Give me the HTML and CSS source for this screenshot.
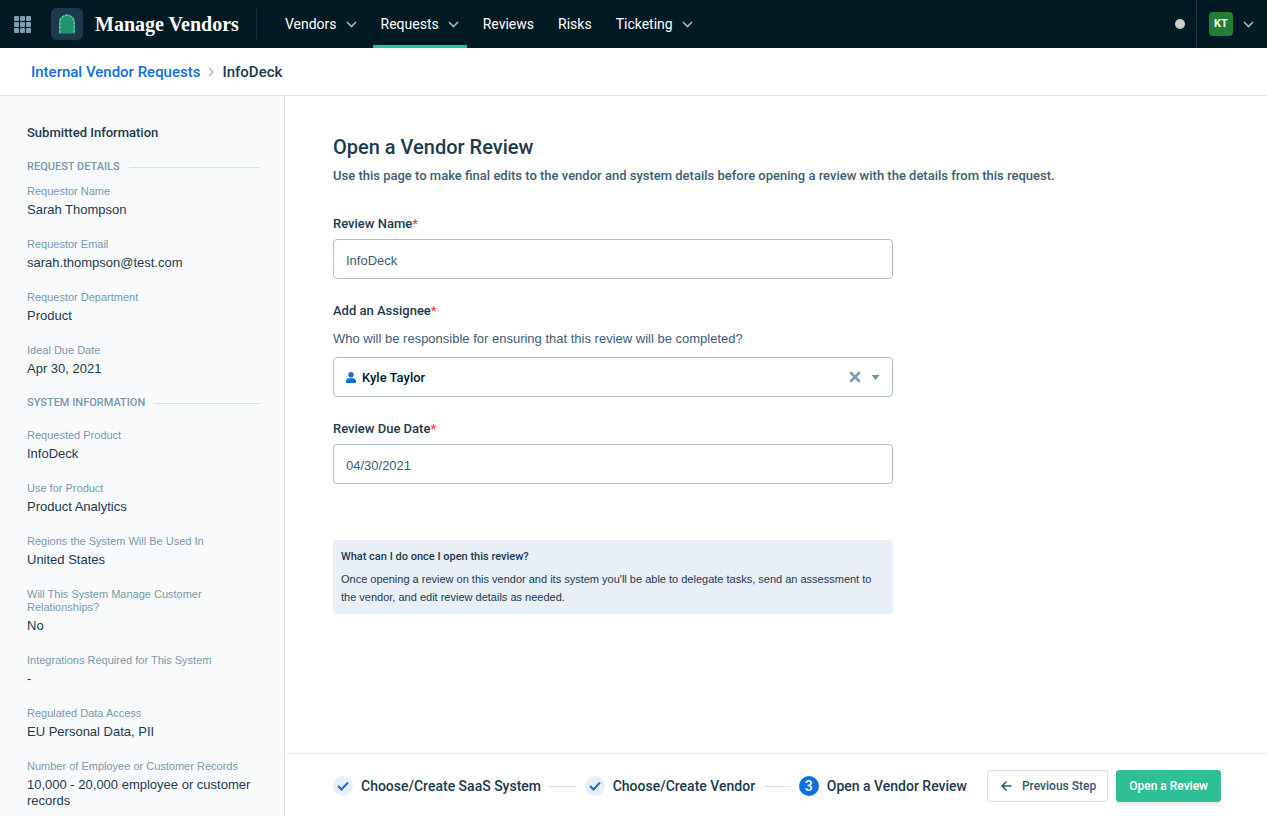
FILE: index.html
```html
<!DOCTYPE html>
<html lang="en">
<head>
<meta charset="utf-8">
<meta name="viewport" content="width=device-width, initial-scale=1">
<title>Manage Vendors – InfoDeck</title>
<link rel="stylesheet" href="styles.css">
</head>
<body>
<header class="topbar">
  <button class="icon-button" type="button" aria-label="Apps">
    <svg width="17" height="17" viewBox="0 0 17 17" fill="#7f9cb2"><rect width="5" height="5" rx="1"/><rect x="6" width="5" height="5" rx="1"/><rect x="12" width="5" height="5" rx="1"/><rect y="6" width="5" height="5" rx="1"/><rect x="6" y="6" width="5" height="5" rx="1"/><rect x="12" y="6" width="5" height="5" rx="1"/><rect y="12" width="5" height="5" rx="1"/><rect x="6" y="12" width="5" height="5" rx="1"/><rect x="12" y="12" width="5" height="5" rx="1"/></svg>
  </button>
  <div class="brand">
    <span class="brand-logo">
      <svg width="18" height="20" viewBox="0 0 18 20"><path d="M1 19.500V8.500a8 8 0 0 1 16 0v11z" fill="#22936f"/><path d="M1.800 19V8.500a7.200 7.200 0 0 1 14.400 0V19" fill="none" stroke="#4fd0a4" stroke-width="1.400" stroke-dasharray="3 1"/></svg>
    </span>
    <span class="brand-name">Manage Vendors</span>
  </div>
  <nav class="nav" aria-label="Main">
    <a class="nav-link" href="#">Vendors <svg class="chevron" viewBox="0 0 11 7"><path d="M1 1l4.500 4.500L10 1"/></svg></a>
    <a class="nav-link active" href="#">Requests <svg class="chevron" viewBox="0 0 11 7"><path d="M1 1l4.500 4.500L10 1"/></svg></a>
    <a class="nav-link" href="#">Reviews</a>
    <a class="nav-link" href="#">Risks</a>
    <a class="nav-link" href="#">Ticketing <svg class="chevron" viewBox="0 0 11 7"><path d="M1 1l4.500 4.500L10 1"/></svg></a>
  </nav>
  <span class="status-dot"></span>
  <button class="account" type="button" aria-label="Account">
    <span class="avatar">KT</span>
    <svg class="chevron" viewBox="0 0 11 7"><path d="M1 1l4.500 4.500L10 1"/></svg>
  </button>
</header>

<nav class="breadcrumb" aria-label="Breadcrumb">
  <a class="crumb-link" href="#">Internal Vendor Requests</a>
  <svg width="6" height="10" viewBox="0 0 6 10" fill="none" stroke="#a9bccb" stroke-width="1.500"><path d="M1 1l4 4-4 4"/></svg>
  <span>InfoDeck</span>
</nav>

<div class="layout">
  <aside class="sidebar">
    <h2 class="sidebar-title">Submitted Information</h2>
    <section class="section">
      <h3 class="section-title">REQUEST DETAILS</h3>
      <dl class="facts">
        <div><dt>Requestor Name</dt><dd>Sarah Thompson</dd></div>
        <div><dt>Requestor Email</dt><dd>sarah.thompson@test.com</dd></div>
        <div><dt>Requestor Department</dt><dd>Product</dd></div>
        <div><dt>Ideal Due Date</dt><dd>Apr 30, 2021</dd></div>
      </dl>
    </section>
    <section class="section spaced">
      <h3 class="section-title">SYSTEM INFORMATION</h3>
      <dl class="facts">
        <div><dt>Requested Product</dt><dd>InfoDeck</dd></div>
        <div><dt>Use for Product</dt><dd>Product Analytics</dd></div>
        <div><dt>Regions the System Will Be Used In</dt><dd>United States</dd></div>
        <div><dt>Will This System Manage Customer Relationships?</dt><dd>No</dd></div>
        <div><dt>Integrations Required for This System</dt><dd>-</dd></div>
        <div><dt>Regulated Data Access</dt><dd>EU Personal Data, PII</dd></div>
        <div><dt>Number of Employee or Customer Records</dt><dd>10,000 - 20,000 employee or customer records</dd></div>
      </dl>
    </section>
  </aside>

  <main class="main">
    <form class="content" id="review">
      <h1 class="title">Open a Vendor Review</h1>
      <p class="lead">Use this page to make final edits to the vendor and system details before opening a review with the details from this request.</p>

      <div class="field">
        <label class="label" for="name">Review Name<span class="required">*</span></label>
        <input class="control" id="name" type="text" value="InfoDeck">
      </div>

      <div class="field">
        <label class="label" for="assignee">Add an Assignee<span class="required">*</span></label>
        <p class="hint" id="assignee-hint">Who will be responsible for ensuring that this review will be completed?</p>
        <div class="picker">
          <select class="control picker-select" id="assignee" aria-describedby="assignee-hint"><option>Kyle Taylor</option></select>
          <svg class="picker-user" width="10" height="11" viewBox="0 0 10 11" fill="#0f6fde"><circle cx="5" cy="2.700" r="2.700"/><path d="M0 11V9.300C0 7.500 1.200 6.200 2.900 6.200h4.200C8.800 6.200 10 7.500 10 9.300V11z"/></svg>
          <button class="picker-clear" type="button" aria-label="Clear assignee"><svg width="12" height="12" viewBox="0 0 12 12" stroke="#7b9cb3" stroke-width="2.600" stroke-linecap="round"><path d="M2 2l8 8M10 2l-8 8"/></svg></button>
          <svg class="picker-arrow" width="9" height="5" viewBox="0 0 9 5" fill="#7095ae"><path d="M.5 0h8L4.500 5z"/></svg>
        </div>
      </div>

      <div class="field">
        <label class="label" for="due">Review Due Date<span class="required">*</span></label>
        <input class="control" id="due" type="text" value="04/30/2021">
      </div>

      <section class="note">
        <h2 class="note-title">What can I do once I open this review?</h2>
        <p class="note-text">Once opening a review on this vendor and its system you'll be able to delegate tasks, send an assessment to the vendor, and edit review details as needed.</p>
      </section>
    </form>

    <footer class="footer">
      <ol class="steps">
        <li class="step"><span class="badge"><svg width="12" height="10" viewBox="0 0 12 10" fill="none" stroke="#0f6fde" stroke-width="2"><path d="M1 5l3.500 3.500L11 1.500"/></svg></span>Choose/Create SaaS System</li>
        <li class="step"><span class="badge"><svg width="12" height="10" viewBox="0 0 12 10" fill="none" stroke="#0f6fde" stroke-width="2"><path d="M1 5l3.500 3.500L11 1.500"/></svg></span>Choose/Create Vendor</li>
        <li class="step" aria-current="step"><span class="badge current">3</span>Open a Vendor Review</li>
      </ol>
      <div class="actions">
        <button class="button" type="button"><svg width="11" height="10" viewBox="0 0 11 10" fill="none" stroke="#35566d" stroke-width="1.600" stroke-linecap="round" stroke-linejoin="round"><path d="M10 5H1M5 1L1 5l4 4"/></svg>Previous Step</button>
        <button class="button primary" type="submit" form="review">Open a Review</button>
      </div>
    </footer>
  </main>
</div>
</body>
</html>
```
FILE: styles.css
```css
:root {
  --text: "Liberation Sans", Arial, sans-serif;
  --medium: Roboto, "Liberation Sans", sans-serif;
  --ink: #1b3a4e;
  --slate: #3d5d74;
  --muted: #7898ae;
  --line: #d5e2ed;
}

* { box-sizing: border-box; }

body {
  margin: 0;
  height: 100vh;
  display: flex;
  flex-direction: column;
  font: 13px/16px var(--text);
  color: var(--ink);
  background: #fff;
}

h1, h2, h3, p, dl, dd, ol { margin: 0; padding: 0; }
a { text-decoration: none; }
button { font: inherit; border: 0; padding: 0; background: none; cursor: pointer; }
svg { display: block; flex: none; }

/* Top bar */
.topbar {
  flex: none;
  height: 48px;
  display: flex;
  align-items: center;
  background: #001a23;
  color: #fff;
}
.icon-button { padding: 0 20px 0 14px; }
.brand {
  display: flex;
  align-items: center;
  gap: 12px;
  height: 32px;
  padding-right: 17px;
  border-right: 1px solid #15313f;
}
.brand-logo {
  width: 32px;
  height: 32px;
  display: grid;
  place-items: center;
  border-radius: 6px;
  background: #1e394f;
}
.brand-name { font: bold 20px/32px "Liberation Serif", "Times New Roman", serif; }
.nav {
  flex: 1;
  align-self: stretch;
  display: flex;
  gap: 8px;
  padding-left: 20px;
}
.nav-link {
  display: flex;
  align-items: center;
  gap: 9px;
  padding: 3px 8px 0;
  border-bottom: 3px solid transparent;
  font: 400 14px/20px var(--medium);
  color: #fff;
}
.nav-link.active { border-bottom-color: #2fbf96; }
.chevron {
  width: 11px;
  height: 7px;
  fill: none;
  stroke: #a3b9c9;
  stroke-width: 1.6;
}
.status-dot { width: 10px; height: 10px; margin-right: 11px; border-radius: 50%; background: #ccc; }
.account {
  align-self: stretch;
  display: flex;
  align-items: center;
  gap: 10px;
  padding: 0 13px 0 12px;
  border-left: 1px solid #15313f;
}
.avatar {
  width: 24px;
  height: 24px;
  border-radius: 4px;
  background: #267c35;
  color: #fff;
  font: 700 11px/24px var(--medium);
}

/* Breadcrumb */
.breadcrumb {
  flex: none;
  height: 48px;
  display: flex;
  align-items: center;
  gap: 8px;
  padding: 0 31px;
  border-bottom: 1px solid var(--line);
  font: 500 15px/20px var(--medium);
}
.crumb-link { color: #0f6fde; }

.layout { flex: 1; min-height: 0; display: flex; }

/* Submitted information */
.sidebar {
  flex: none;
  width: 285px;
  overflow: hidden;
  padding: 29px 24px 0 27px;
  border-right: 1px solid var(--line);
  background: #f9fafc;
}
.sidebar-title { font: 500 13px/16px var(--medium); }
.section { padding-top: 18px; }
.section-title {
  display: flex;
  align-items: center;
  gap: 9px;
  margin-bottom: 10px;
  font: 500 11px/16px var(--medium);
  color: var(--muted);
}
.section-title::after { content: ""; flex: 1; height: 1px; background: var(--line); }
.spaced .section-title { margin-bottom: 18px; }
.facts { display: flex; flex-direction: column; gap: 20px; }
.facts dt { margin-bottom: 4px; font-size: 11px; line-height: 13px; color: var(--muted); }

/* Review form */
.main { flex: 1; min-width: 0; display: flex; flex-direction: column; }
.content { flex: 1; min-height: 0; overflow: auto; padding: 39px 48px 24px; }
.title { font: 500 20px/24px var(--medium); }
.lead { margin: 7px 0 28px; font: 500 13px/20px var(--medium); color: var(--slate); }
.field { max-width: 560px; margin-bottom: 22px; }
.label { display: block; margin-bottom: 5px; font: 500 13px/20px var(--medium); }
.required { color: #f0453c; }
.hint { margin: 8px 0; line-height: 20px; color: var(--slate); }
.control {
  display: block;
  width: 100%;
  height: 40px;
  padding: 2px 12px 0;
  border: 1px solid #aabdcb;
  border-radius: 4px;
  background: #fff;
  color: var(--slate);
  font: 13px/20px var(--text);
}
.picker { position: relative; }
.picker-select {
  appearance: none;
  padding: 2px 64px 0 28px;
  font: 500 13px/20px var(--medium);
  color: #001a23;
}
.picker-user { position: absolute; left: 13px; top: 15px; pointer-events: none; }
.picker-clear { position: absolute; right: 32px; top: 14px; }
.picker-arrow { position: absolute; right: 13px; top: 18px; pointer-events: none; }

.note {
  max-width: 560px;
  margin-top: 56px;
  padding: 8px;
  border-radius: 4px;
  background: #e8eff6;
}
.note-title { margin-bottom: 4px; font: 500 11px/18px var(--medium); }
.note-text { font-size: 11px; line-height: 18px; }

/* Step footer */
.footer {
  flex: none;
  display: flex;
  align-items: center;
  gap: 20px;
  padding: 16px 46px 14px 48px;
  border-top: 1px solid #e9edf0;
}
.steps { flex: 1; display: flex; gap: 8px; list-style: none; }
.step {
  display: flex;
  align-items: center;
  gap: 8px;
  white-space: nowrap;
  font: 500 14px/20px var(--medium);
}
.step:not(:last-child) { flex: 1 1 auto; }
.step:not(:last-child)::after { content: ""; flex: 1; height: 1px; background: var(--line); }
.badge {
  width: 20px;
  height: 20px;
  display: grid;
  place-items: center;
  border-radius: 50%;
  background: #e8eff6;
}
.badge.current { background: #0f6fde; color: #fff; }
.actions { display: flex; gap: 8px; }
.button {
  height: 32px;
  display: flex;
  align-items: center;
  gap: 10px;
  padding: 0 11px 0 13px;
  border: 1px solid var(--line);
  border-radius: 3px;
  background: #fff;
  color: #35566d;
  font: 500 12px/16px var(--medium);
}
.button.primary {
  padding: 0 12px;
  border-color: #35c297;
  background: #2fbf96;
  color: #fff;
  box-shadow: 0 2px 4px #0000001a;
}
```
